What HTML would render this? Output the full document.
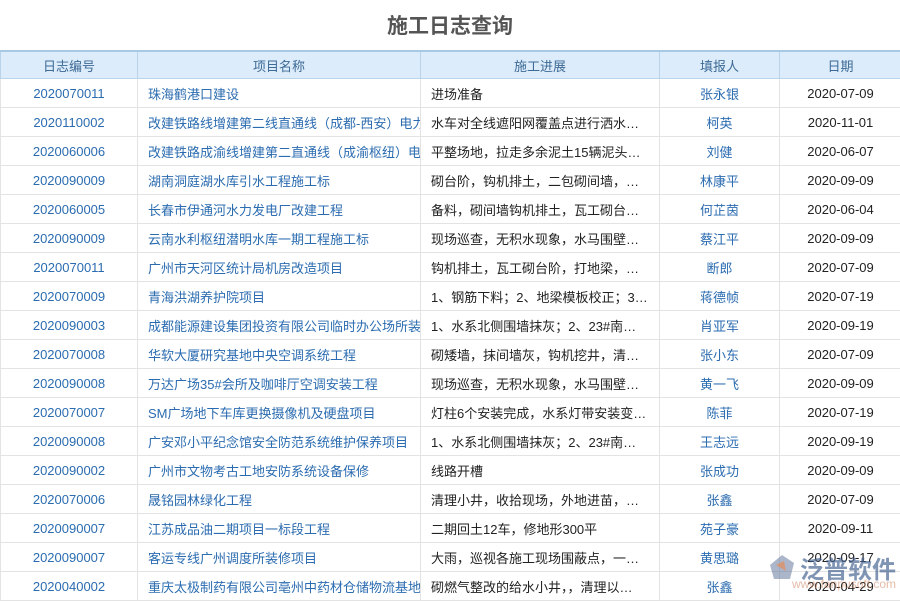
<!DOCTYPE html>
<html><head><meta charset="utf-8"><style>
body{margin:0;width:900px;height:600px;overflow:hidden;background:#fff;font-family:"Liberation Sans","Noto Sans CJK SC",sans-serif;position:relative}
h1{margin:0;position:absolute;top:10px;left:0;width:900px;text-align:center;font-size:21px;color:#555;font-weight:bold}
table{position:absolute;top:50px;left:0;width:901px;border-collapse:collapse;table-layout:fixed;font-size:13px}
th{height:24px;background:#dcecfa;color:#3d6a96;font-weight:normal;border:1px solid #b9d3ea;border-top:2px solid #a8c8e4}
td{height:28px;border:1px solid #e3e3e3;white-space:nowrap;overflow:hidden;padding:0;color:#222}
td.c{text-align:center}
td.b{color:#2b6cb0}
td.l{padding-left:10px}
.wm{position:absolute;top:550px;font-size:24px;color:rgba(60,90,140,0.65);font-weight:bold}
.wm2{position:absolute;left:792px;top:577px;font-size:12px;color:rgba(200,120,80,0.5)}
</style></head><body>
<h1>施工日志查询</h1>
<table>
<colgroup><col style="width:137px"><col style="width:283px"><col style="width:239px"><col style="width:120px"><col style="width:122px"></colgroup>
<tr><th>日志编号</th><th>项目名称</th><th>施工进展</th><th>填报人</th><th>日期</th></tr>
<tr><td class="c b">2020070011</td><td class="l b">珠海鹤港口建设</td><td class="l">进场准备</td><td class="c b">张永银</td><td class="c">2020-07-09</td></tr>
<tr><td class="c b">2020110002</td><td class="l b">改建铁路线增建第二线直通线（成都-西安）电力</td><td class="l">水车对全线遮阳网覆盖点进行洒水…</td><td class="c b">柯英</td><td class="c">2020-11-01</td></tr>
<tr><td class="c b">2020060006</td><td class="l b">改建铁路成渝线增建第二直通线（成渝枢纽）电</td><td class="l">平整场地，拉走多余泥土15辆泥头…</td><td class="c b">刘健</td><td class="c">2020-06-07</td></tr>
<tr><td class="c b">2020090009</td><td class="l b">湖南洞庭湖水库引水工程施工标</td><td class="l">砌台阶，钩机排土，二包砌间墙，…</td><td class="c b">林康平</td><td class="c">2020-09-09</td></tr>
<tr><td class="c b">2020060005</td><td class="l b">长春市伊通河水力发电厂改建工程</td><td class="l">备料，砌间墙钩机排土，瓦工砌台…</td><td class="c b">何芷茵</td><td class="c">2020-06-04</td></tr>
<tr><td class="c b">2020090009</td><td class="l b">云南水利枢纽潜明水库一期工程施工标</td><td class="l">现场巡查，无积水现象，水马围壁…</td><td class="c b">蔡江平</td><td class="c">2020-09-09</td></tr>
<tr><td class="c b">2020070011</td><td class="l b">广州市天河区统计局机房改造项目</td><td class="l">钩机排土，瓦工砌台阶，打地梁，…</td><td class="c b">断郎</td><td class="c">2020-07-09</td></tr>
<tr><td class="c b">2020070009</td><td class="l b">青海洪湖养护院项目</td><td class="l">1、钢筋下料；2、地梁模板校正；3…</td><td class="c b">蒋德帧</td><td class="c">2020-07-19</td></tr>
<tr><td class="c b">2020090003</td><td class="l b">成都能源建设集团投资有限公司临时办公场所装</td><td class="l">1、水系北侧围墙抹灰；2、23#南…</td><td class="c b">肖亚军</td><td class="c">2020-09-19</td></tr>
<tr><td class="c b">2020070008</td><td class="l b">华软大厦研究基地中央空调系统工程</td><td class="l">砌矮墙，抹间墙灰，钩机挖井，清…</td><td class="c b">张小东</td><td class="c">2020-07-09</td></tr>
<tr><td class="c b">2020090008</td><td class="l b">万达广场35#会所及咖啡厅空调安装工程</td><td class="l">现场巡查，无积水现象，水马围壁…</td><td class="c b">黄一飞</td><td class="c">2020-09-09</td></tr>
<tr><td class="c b">2020070007</td><td class="l b">SM广场地下车库更换摄像机及硬盘项目</td><td class="l">灯柱6个安装完成，水系灯带安装变…</td><td class="c b">陈菲</td><td class="c">2020-07-19</td></tr>
<tr><td class="c b">2020090008</td><td class="l b">广安邓小平纪念馆安全防范系统维护保养项目</td><td class="l">1、水系北侧围墙抹灰；2、23#南…</td><td class="c b">王志远</td><td class="c">2020-09-19</td></tr>
<tr><td class="c b">2020090002</td><td class="l b">广州市文物考古工地安防系统设备保修</td><td class="l">线路开槽</td><td class="c b">张成功</td><td class="c">2020-09-09</td></tr>
<tr><td class="c b">2020070006</td><td class="l b">晟铭园林绿化工程</td><td class="l">清理小井，收拾现场，外地进苗，…</td><td class="c b">张鑫</td><td class="c">2020-07-09</td></tr>
<tr><td class="c b">2020090007</td><td class="l b">江苏成品油二期项目一标段工程</td><td class="l">二期回土12车，修地形300平</td><td class="c b">苑子豪</td><td class="c">2020-09-11</td></tr>
<tr><td class="c b">2020090007</td><td class="l b">客运专线广州调度所装修项目</td><td class="l">大雨，巡视各施工现场围蔽点，一…</td><td class="c b">黄思璐</td><td class="c">2020-09-17</td></tr>
<tr><td class="c b">2020040002</td><td class="l b">重庆太极制药有限公司亳州中药材仓储物流基地</td><td class="l">砌燃气整改的给水小井，，清理以…</td><td class="c b">张鑫</td><td class="c">2020-04-29</td></tr>
</table>
<svg style="position:absolute;left:768px;top:553px" width="28" height="30"><path d="M14 2 L26 10 L22 26 L6 26 L2 12 Z" fill="rgba(90,110,150,0.5)"/><path d="M8 12 L16 8 L18 18 Z" fill="rgba(230,140,90,0.7)"/></svg>
<div class="wm" style="left:800px">泛普软件</div>
<div class="wm2">www.fanpusoft.com</div>
</body></html>
